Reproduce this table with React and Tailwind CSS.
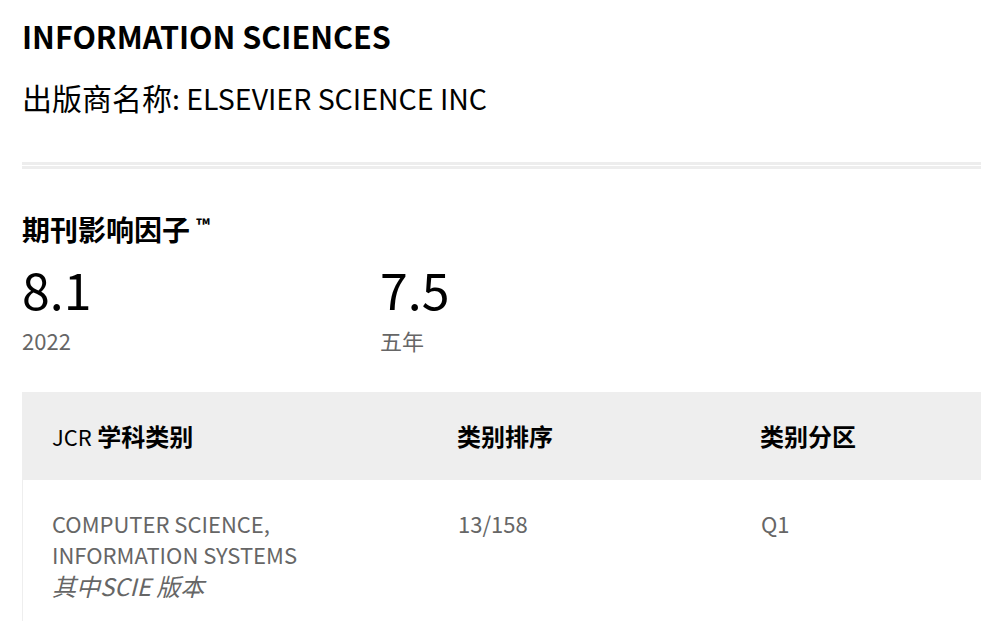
import React from 'react';

const font = { fontFamily: '"Noto Sans CJK SC", "Noto Sans", sans-serif' };

export default function App() {
    const rows = [
        {
            category: ['COMPUTER SCIENCE,', 'INFORMATION SYSTEMS'],
            edition: '其中SCIE 版本',
            rank: '13/158',
            quartile: 'Q1',
        },
    ];

    return (
        <div className="min-h-screen bg-white pl-[22px] pt-[18px] overflow-hidden" style={font}>
            <h1 className="text-[30.5px] leading-[36px] font-bold text-black">INFORMATION SCIENCES</h1>
            <p className="mt-[25px] text-[30px] leading-[36px] text-black">
                出版商名称<span className="text-[28.5px]">: ELSEVIER SCIENCE INC</span>
            </p>

            <div className="mt-[46px] h-[7px] border-y-[3px] border-[#ededed]" />

            <h2 className="mt-[37px] text-[28px] leading-[36px] font-bold text-black">
                期刊影响因子 <span className="text-[18px] align-[9px]">™</span>
            </h2>

            <div className="mt-[13px] flex">
                <div className="w-[358px]">
                    <div className="text-[50px] leading-[56px] text-black">8.1</div>
                    <div className="mt-[10px] text-[22px] leading-[28px] text-[#666]">2022</div>
                </div>
                <div>
                    <div className="text-[50px] leading-[56px] text-black">7.5</div>
                    <div className="mt-[10px] text-[22px] leading-[28px] text-[#666]">五年</div>
                </div>
            </div>

            <div className="mt-[38px]">
                <div className="flex h-[88px] items-center bg-[#eeeeee] text-[24px] font-bold text-black">
                    <div className="w-[435px] pl-[30px]">
                        <span className="font-normal text-[22px]">JCR</span> 学科类别
                    </div>
                    <div className="w-[303px]">类别排序</div>
                    <div className="flex-1">类别分区</div>
                </div>
                {rows.map((r) => (
                    <div key={r.rank} className="flex border-l border-[#eeeeee] pt-[28px] pb-[20px] text-[22px] leading-[31px] text-[#666]">
                        <div className="w-[435px] pl-[29px]">
                            <div className="max-w-[300px]">
                                {r.category.map((c) => (
                                    <div key={c}>{c}</div>
                                ))}
                                <div className="italic text-[24px]">{r.edition}</div>
                            </div>
                        </div>
                        <div className="w-[303px]">{r.rank}</div>
                        <div className="flex-1">{r.quartile}</div>
                    </div>
                ))}
            </div>
        </div>
    );
}
